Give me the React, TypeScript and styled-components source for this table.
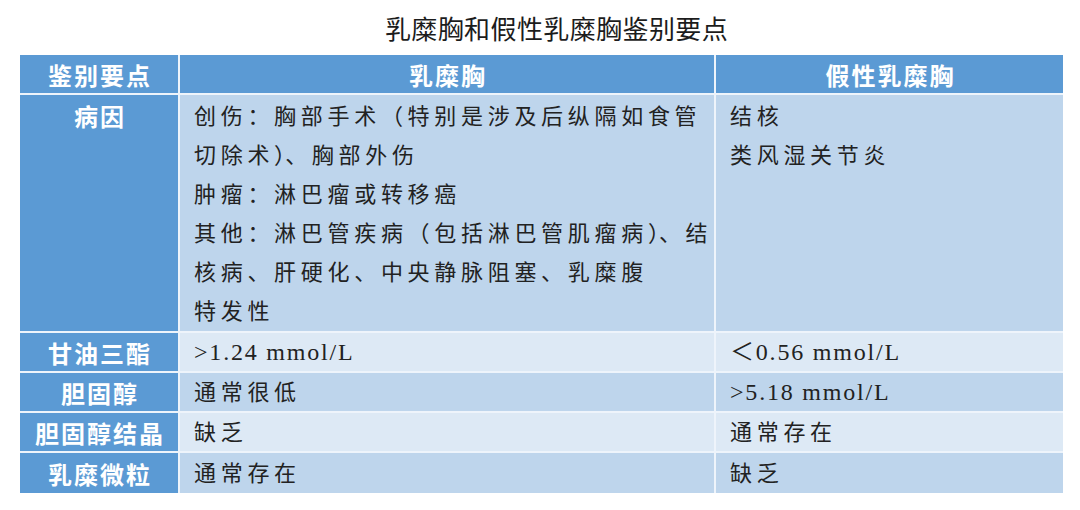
import styled, { createGlobalStyle } from "styled-components";

const GlobalStyle = createGlobalStyle`
  html, body {
    margin: 0;
    padding: 0;
    background: #ffffff;
  }
`;

const Page = styled.div`
  width: 1080px;
  height: 510px;
  padding: 0 17px 0 20px;
  box-sizing: border-box;
  display: flex;
  flex-direction: column;
`;

const Title = styled.div`
  height: 55px;
  display: flex;
  align-items: center;
  justify-content: center;
  padding-left: 30px;
  font-family: "Noto Sans CJK SC", sans-serif;
  font-size: 26px;
  font-weight: 400;
  color: #1c1c1c;
  letter-spacing: 0.4px;
`;

const Table = styled.div`
  display: grid;
  grid-template-columns: 158px 534px 347px;
  grid-template-rows: 38px 236px 38px 38px 38px 40px;
  gap: 2px;
  background: #eef4fb;
`;

const HeadCell = styled.div`
  background: #5b9ad4;
  color: #ffffff;
  font-family: "Noto Sans CJK SC", sans-serif;
  font-weight: 700;
  font-size: 24px;
  letter-spacing: 2px;
  display: flex;
  align-items: center;
  justify-content: center;
  padding-left: 2px;
`;

const LabelCell = styled.div<{ $top?: boolean }>`
  background: #5b9ad4;
  color: #ffffff;
  font-family: "Noto Sans CJK SC", sans-serif;
  font-weight: 700;
  font-size: 24px;
  letter-spacing: 2px;
  display: flex;
  justify-content: center;
  align-items: ${(p) => (p.$top ? "flex-start" : "center")};
  padding-top: ${(p) => (p.$top ? "3px" : "0")};
  padding-left: 2px;
`;

const BodyCell = styled.div<{ $light?: boolean; $tight?: boolean }>`
  background: ${(p) => (p.$light ? "#dde9f5" : "#bed5ec")};
  color: #222222;
  font-family: "Liberation Serif", "Noto Sans CJK SC", serif;
  font-size: ${(p) => (p.$tight ? "24px" : "22px")};
  letter-spacing: ${(p) => (p.$tight ? "1.8px" : "4.7px")};
  line-height: 39px;
  padding: 0 0 0 14px;
  display: flex;
  flex-direction: column;
  justify-content: center;
  white-space: nowrap;
`;

const LinesCell = styled(BodyCell)`
  justify-content: flex-start;
  padding-top: 2px;
`;

const Line = styled.div`
  height: 39.3px;
`;

const Punct = styled.span`
  letter-spacing: -5px;
  margin-right: 5px;
`;

const pseudoLines = ["结核", "类风湿关节炎"];

const rows = [
  { label: "甘油三酯", a: ">1.24 mmol/L", b: "＜0.56 mmol/L", tightA: true, tightB: true },
  { label: "胆固醇", a: "通常很低", b: ">5.18 mmol/L", tightB: true },
  { label: "胆固醇结晶", a: "缺乏", b: "通常存在" },
  { label: "乳糜微粒", a: "通常存在", b: "缺乏" },
];

const App = () => {
  return (
    <Page>
      <GlobalStyle />
      <Title>乳糜胸和假性乳糜胸鉴别要点</Title>
      <Table>
        <HeadCell>鉴别要点</HeadCell>
        <HeadCell>乳糜胸</HeadCell>
        <HeadCell>假性乳糜胸</HeadCell>

        <LabelCell $top>病因</LabelCell>
        <LinesCell>
          <Line>创伤：胸部手术（特别是涉及后纵隔如食管</Line>
          <Line>
            切除术<Punct>）</Punct>、胸部外伤
          </Line>
          <Line>肿瘤：淋巴瘤或转移癌</Line>
          <Line>
            其他：淋巴管疾病（包括淋巴管肌瘤病<Punct>）</Punct>、结
          </Line>
          <Line>核病、肝硬化、中央静脉阻塞、乳糜腹</Line>
          <Line>特发性</Line>
        </LinesCell>
        <LinesCell>
          {pseudoLines.map((line) => (
            <Line key={line}>{line}</Line>
          ))}
        </LinesCell>

        {rows.map((row, i) => {
          const light = i % 2 === 0;
          return [
            <LabelCell key={row.label + "-l"}>{row.label}</LabelCell>,
            <BodyCell key={row.label + "-a"} $light={light} $tight={row.tightA}>
              {row.a}
            </BodyCell>,
            <BodyCell key={row.label + "-b"} $light={light} $tight={row.tightB}>
              {row.b}
            </BodyCell>,
          ];
        })}
      </Table>
    </Page>
  );
};

export default App;
